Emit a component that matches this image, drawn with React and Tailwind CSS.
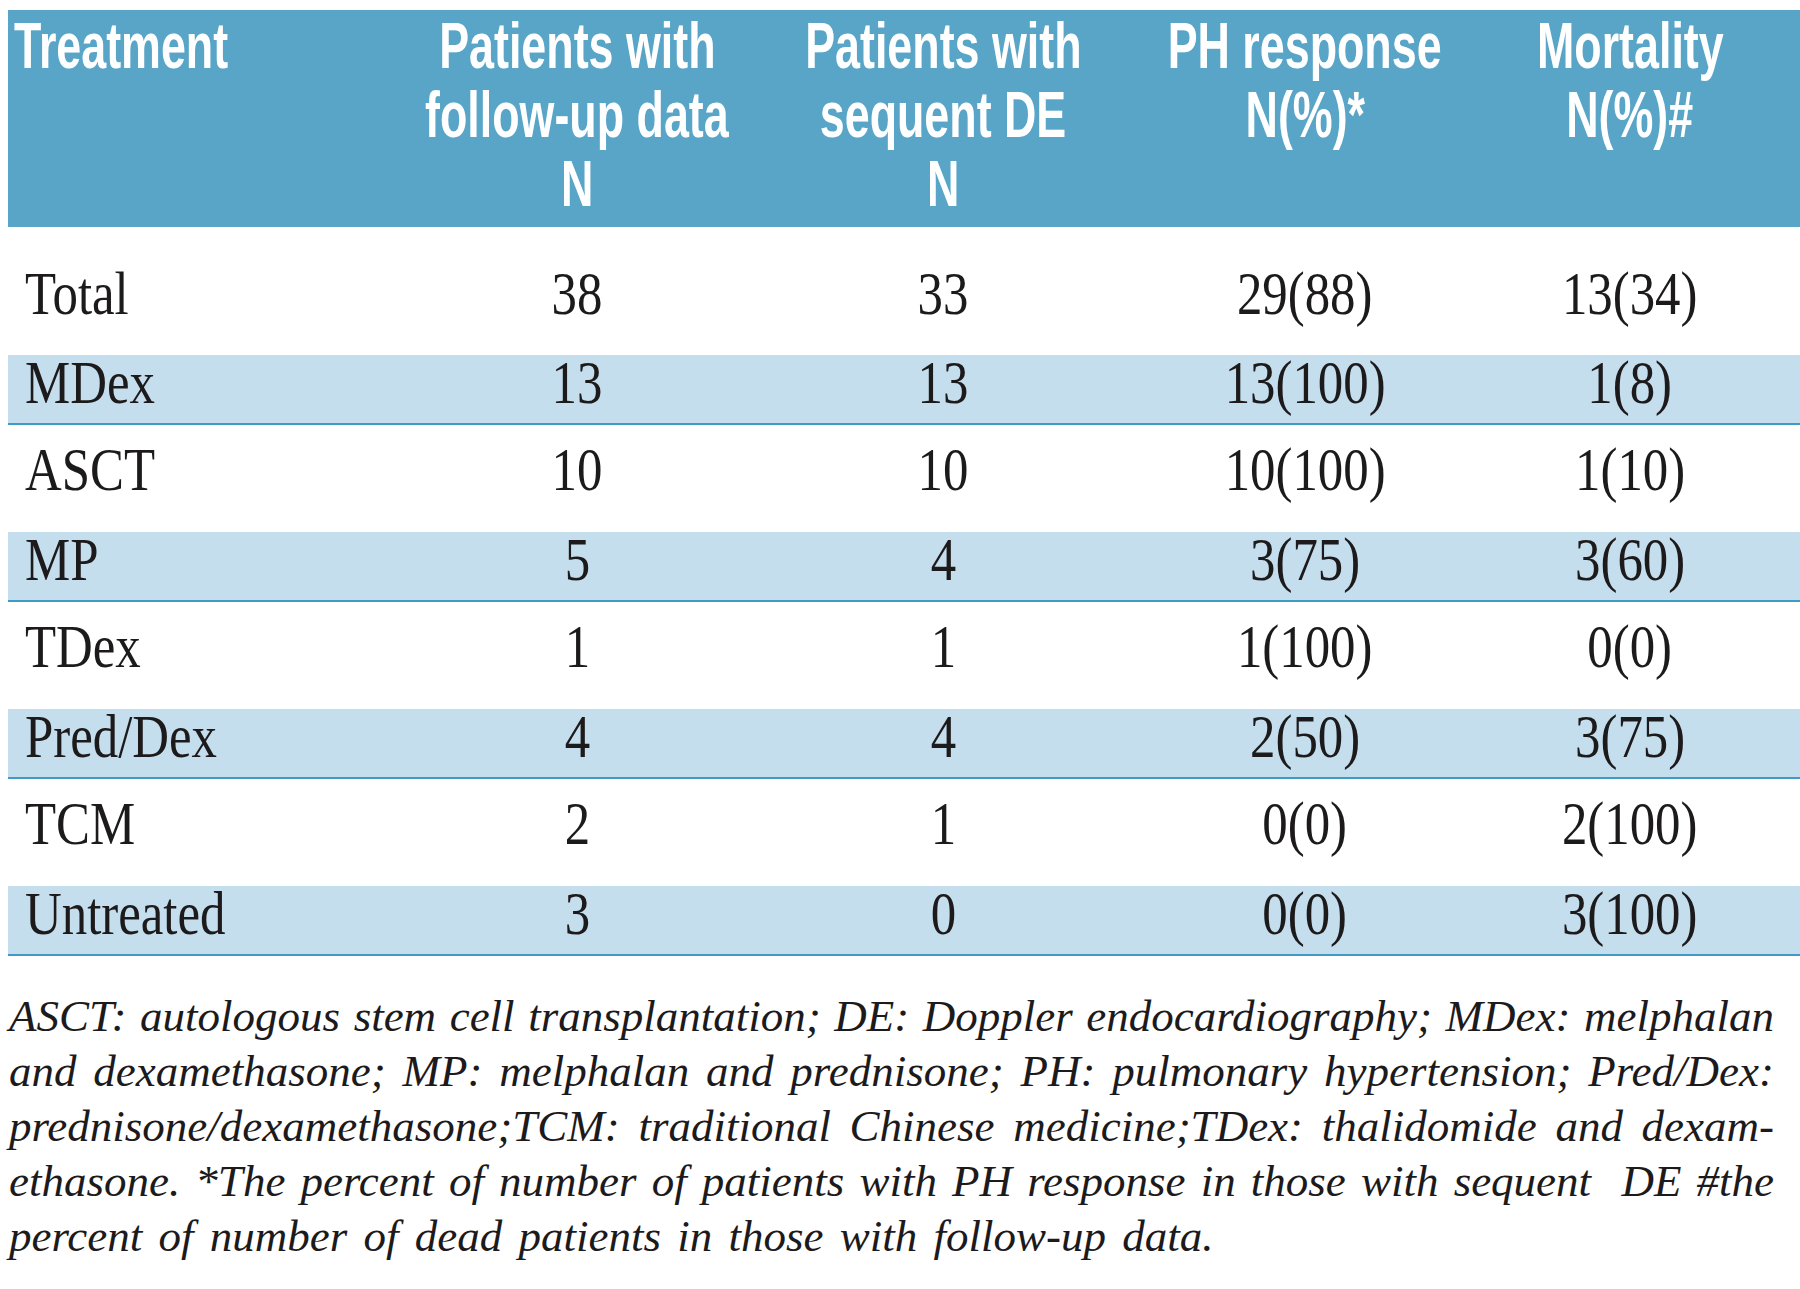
import React from "react";

const rows = [
  { t: "Total", a: "38", b: "33", c: "29(88)", d: "13(34)", kind: "first" },
  { t: "MDex", a: "13", b: "13", c: "13(100)", d: "1(8)", kind: "blue" },
  { t: "ASCT", a: "10", b: "10", c: "10(100)", d: "1(10)", kind: "white" },
  { t: "MP", a: "5", b: "4", c: "3(75)", d: "3(60)", kind: "blue" },
  { t: "TDex", a: "1", b: "1", c: "1(100)", d: "0(0)", kind: "white" },
  { t: "Pred/Dex", a: "4", b: "4", c: "2(50)", d: "3(75)", kind: "blue" },
  { t: "TCM", a: "2", b: "1", c: "0(0)", d: "2(100)", kind: "white" },
  { t: "Untreated", a: "3", b: "0", c: "0(0)", d: "3(100)", kind: "blue" },
];

const rowClass = {
  first: "h-[128px] pt-[5px] leading-[1.15] bg-white",
  blue: "h-[70px] pb-[14px] leading-[40px] bg-[#c5deed] border-b-2 border-[#3e9bc6]",
  white: "h-[107px] pb-[18px] leading-[1.15] bg-white",
};

const serif = { fontFamily: '"Liberation Serif", "Times New Roman", serif' };
const sans = { fontFamily: '"Liberation Sans", Arial, sans-serif' };

function HeadLine({ children }) {
  return (
    <div className="flex justify-center whitespace-nowrap h-[69px] leading-[69px]">
      <span className="inline-block scale-x-[0.7] origin-center">{children}</span>
    </div>
  );
}

function Num({ children }) {
  return (
    <div className="flex items-center justify-center whitespace-nowrap">
      <span className="inline-block scale-x-[0.82] origin-center">{children}</span>
    </div>
  );
}

const foot = [
  "ASCT: autologous stem cell transplantation; DE: Doppler endocardiography; MDex: melphalan",
  "and dexamethasone; MP: melphalan and prednisone; PH: pulmonary hypertension; Pred/Dex:",
  "prednisone/dexamethasone;TCM: traditional Chinese medicine;TDex: thalidomide and dexam-",
  "ethasone. *The percent of number of patients with PH response in those with sequent\u00a0 DE #the",
];

export default function App() {
  return (
    <div className="w-[1800px] h-[1289px] bg-white overflow-hidden pt-[10px]">
      <div className="ml-[8px] w-[1792px]">
        <div
          className="grid grid-cols-[386px_366px_366px_358px_292px_1fr] h-[217px] bg-[#58a5c8] pt-[2px] text-white font-bold text-[64px]"
          style={sans}
        >
          <div className="pl-[6px] whitespace-nowrap h-[69px] leading-[69px]">
            <span className="inline-block scale-x-[0.7] origin-left">Treatment</span>
          </div>
          <div className="flex flex-col">
            <HeadLine>Patients with</HeadLine>
            <HeadLine>follow-up data</HeadLine>
            <HeadLine>N</HeadLine>
          </div>
          <div className="flex flex-col">
            <HeadLine>Patients with</HeadLine>
            <HeadLine>sequent DE</HeadLine>
            <HeadLine>N</HeadLine>
          </div>
          <div className="flex flex-col">
            <HeadLine>PH response</HeadLine>
            <HeadLine>N(%)*</HeadLine>
          </div>
          <div className="flex flex-col">
            <HeadLine>Mortality</HeadLine>
            <HeadLine>N(%)#</HeadLine>
          </div>
          <div />
        </div>

        {rows.map((r) => (
          <div
            key={r.t}
            className={`grid grid-cols-[386px_366px_366px_358px_292px_1fr] items-center text-[62px] text-[#1c1a1b] ${rowClass[r.kind]}`}
            style={serif}
          >
            <div className="pl-[17px] whitespace-nowrap">
              <span className="inline-block scale-x-[0.82] origin-left">{r.t}</span>
            </div>
            <Num>{r.a}</Num>
            <Num>{r.b}</Num>
            <Num>{r.c}</Num>
            <Num>{r.d}</Num>
            <div />
          </div>
        ))}
      </div>

      <div
        className="mt-[33px] ml-[9px] w-[1765px] italic text-[45px] leading-[55px] text-[#1c1a1b]"
        style={serif}
      >
        {foot.map((l) => (
          <div key={l} className="text-justify [text-align-last:justify]">
            {l}
          </div>
        ))}
        <div className="[word-spacing:5px]">percent of number of dead patients in those with follow-up data.</div>
      </div>
    </div>
  );
}
